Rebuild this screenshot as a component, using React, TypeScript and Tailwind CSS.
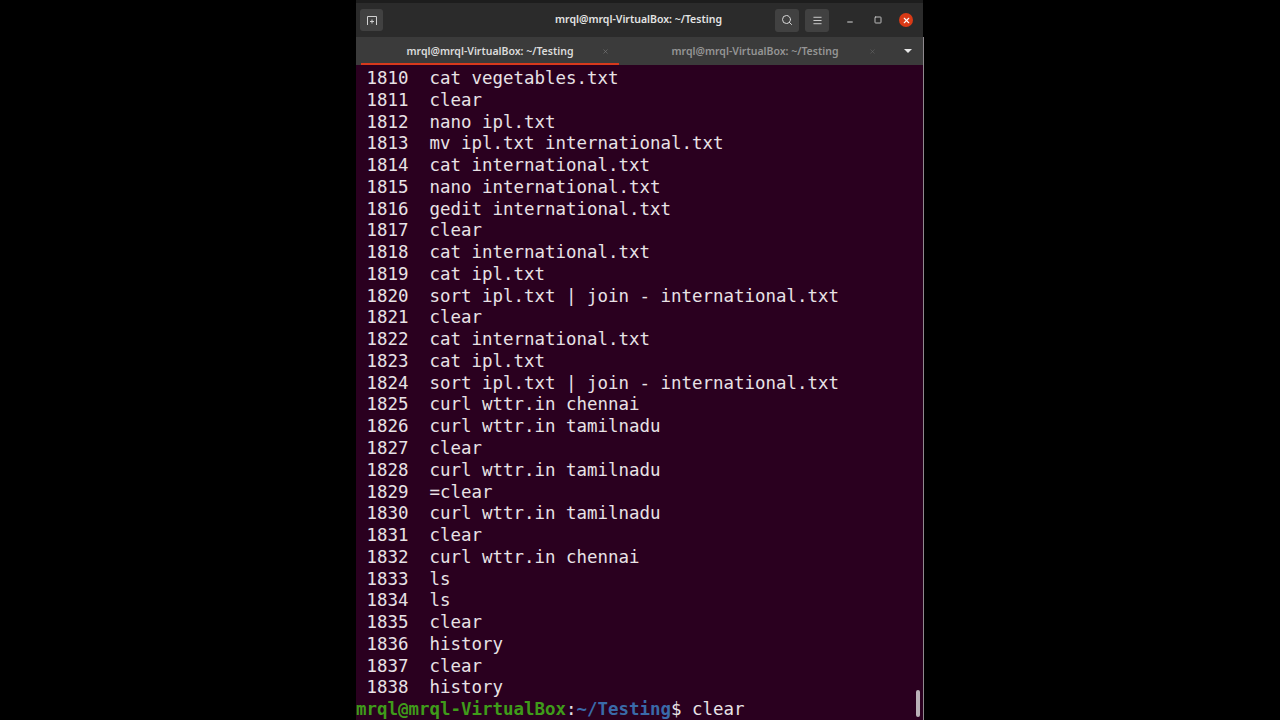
import React from 'react';
import { Search, Menu, X, Minus, Square } from 'lucide-react';

const history: [number, string][] = [
  [1810, 'cat vegetables.txt'],
  [1811, 'clear'],
  [1812, 'nano ipl.txt'],
  [1813, 'mv ipl.txt international.txt'],
  [1814, 'cat international.txt'],
  [1815, 'nano international.txt'],
  [1816, 'gedit international.txt'],
  [1817, 'clear'],
  [1818, 'cat international.txt'],
  [1819, 'cat ipl.txt'],
  [1820, 'sort ipl.txt | join - international.txt'],
  [1821, 'clear'],
  [1822, 'cat international.txt'],
  [1823, 'cat ipl.txt'],
  [1824, 'sort ipl.txt | join - international.txt'],
  [1825, 'curl wttr.in chennai'],
  [1826, 'curl wttr.in tamilnadu'],
  [1827, 'clear'],
  [1828, 'curl wttr.in tamilnadu'],
  [1829, '=clear'],
  [1830, 'curl wttr.in tamilnadu'],
  [1831, 'clear'],
  [1832, 'curl wttr.in chennai'],
  [1833, 'ls'],
  [1834, 'ls'],
  [1835, 'clear'],
  [1836, 'history'],
  [1837, 'clear'],
  [1838, 'history'],
];

const uiFont = "font-['Noto_Sans',sans-serif]";
const monoFont = "font-['DejaVu_Sans_Mono','Liberation_Mono',monospace]";

export default function App() {
  return (
    <div className="h-screen w-screen overflow-hidden bg-black flex justify-center">
      <div className="w-[568px] h-full flex flex-col">
        <div className="h-[37px] shrink-0 mr-[1px] bg-[#2b2b2b] border-t-[3px] border-[#1d1d1d] grid grid-cols-[1fr_auto_1fr] items-center pl-[4px] pr-[10px]">
          <div className="flex">
            <button className="w-[23px] h-[22px] rounded-[3px] bg-[#414141] flex items-center justify-center text-[#d0d0d0]">
              <svg width="12" height="12" viewBox="0 0 12 12" fill="none" stroke="currentColor" strokeWidth="1">
                <path d="M1.5 11V2.5h9V11" />
                <path d="M6 5.5v4M4 7.5h4" />
              </svg>
            </button>
          </div>
          <div className={`text-center text-[10.5px] font-semibold text-[#e4e4e4] pl-[4px] ${uiFont}`}>mrql@mrql-VirtualBox: ~/Testing</div>
          <div className="flex items-center justify-end">
            <button className="w-[24px] h-[23px] rounded-[3px] bg-[#414141] flex items-center justify-center text-[#d8d8d8]">
              <Search size={12} />
            </button>
            <button className="ml-[6px] w-[24px] h-[23px] rounded-[3px] bg-[#414141] flex items-center justify-center text-[#d8d8d8]">
              <Menu size={11} />
            </button>
            <div className="ml-[16px] w-[10px] flex justify-center text-[#d8d8d8]"><Minus size={8} strokeWidth={3} className="translate-y-[2px]" /></div>
            <div className="ml-[18px] w-[10px] flex justify-center text-[#d8d8d8]"><Square size={8} strokeWidth={2.5} /></div>
            <div className="ml-[16px] w-[14px] h-[14px] rounded-full bg-[#d93a16] flex items-center justify-center text-white">
              <X size={9} strokeWidth={3} />
            </div>
          </div>
        </div>

        <div className={`h-[28px] shrink-0 bg-[#3b3b3b] border-r border-[#8f8a8e] flex text-[10.5px] font-semibold ${uiFont}`}>
          <div className="w-[264px] relative flex items-center justify-center pl-[4px] pt-[1px] text-[#dcdcdc]">
            <span>mrql@mrql-VirtualBox: ~/Testing</span>
            <X size={7} className="absolute right-[11px] text-[#7d7d7d]" />
            <div className="absolute left-[5px] right-[1px] bottom-0 h-[2px] bg-[#d8391c]" />
          </div>
          <div className="flex-1 relative flex items-center justify-center pr-[33px] pt-[1px] text-[#959595]">
            <span>mrql@mrql-VirtualBox: ~/Testing</span>
            <X size={7} className="absolute right-[47px] text-[#656565]" />
            <div className="absolute right-[11px] top-[12px] w-0 h-0 border-x-[4px] border-t-[4px] border-x-transparent border-t-[#e8e8e8]" />
          </div>
        </div>

        <div className={`flex-1 relative overflow-hidden border-r border-[#8f8a8e] bg-[#2a001f] pt-[3px] text-[17.44px] leading-[21.76px] text-[#e8e2e6] whitespace-pre ${monoFont}`}>
          {history.map(([n, cmd]) => (
            <div key={n}>{` ${n}  ${cmd}`}</div>
          ))}
          <div>
            <span className="font-bold text-[#3f9b1a]">mrql@mrql-VirtualBox</span>
            <span>:</span>
            <span className="font-bold text-[#3a6aa8]">~/Testing</span>
            <span>$ clear</span>
          </div>
          <div className="absolute right-[3px] bottom-[3px] w-[4px] h-[27px] rounded-full bg-[#b9b1b7]" />
        </div>
      </div>
    </div>
  );
}
